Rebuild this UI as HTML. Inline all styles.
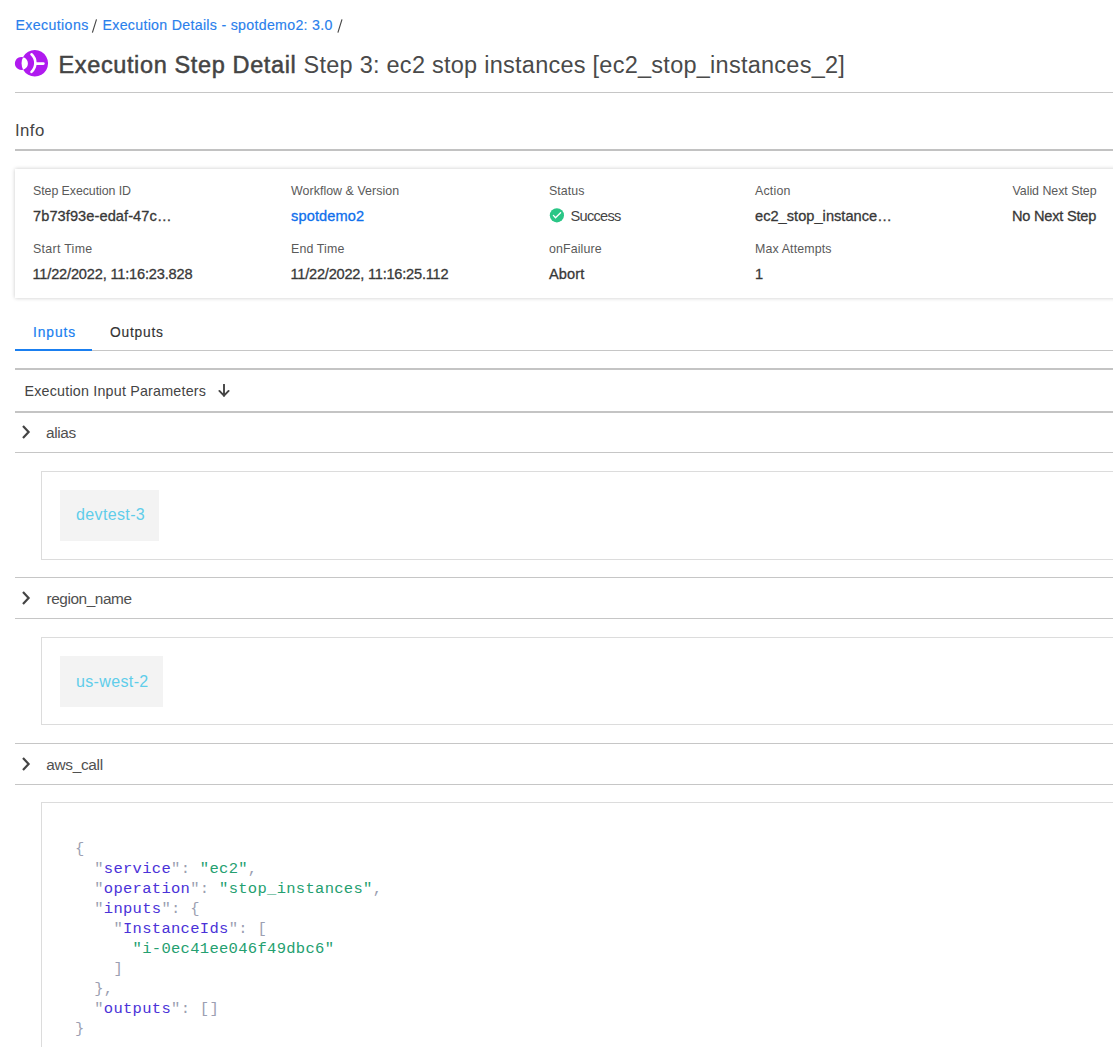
<!DOCTYPE html>
<html>
<head>
<meta charset="utf-8">
<style>
html,body{margin:0;padding:0;background:#fff;}
body{width:1113px;height:1047px;overflow:hidden;position:relative;font-family:"Liberation Sans",sans-serif;color:#444;}
.a{position:absolute;white-space:nowrap;line-height:1;}
.hl{position:absolute;left:15px;width:1110px;height:1px;background:#c6c6c6;}
.bc{font-size:14.2px;color:#2a80ec;top:18px;-webkit-text-stroke:0.15px #2a80ec;}
.sep{font-size:14.2px;color:#555;top:18px;}
.title{font-size:23.5px;top:53.5px;}
.lbl{font-size:12.4px;color:#5a5a5a;}
.r1{top:184.5px;}
.r2{top:242.5px;}
.val{font-size:14.6px;color:#383838;-webkit-text-stroke:0.3px #383838;}
.v1{top:208.6px;}
.v2{top:266.6px;}
.card{position:absolute;left:15px;top:169px;width:1200px;height:129px;background:#fff;box-shadow:0 0 4px rgba(0,0,0,.22);}
.row{font-size:15.4px;color:#505050;}
.chev{position:absolute;left:20px;width:12px;height:16px;}
.box{position:absolute;left:41px;width:1200px;border:1px solid #dcdcdc;background:#fff;}
.chip{position:absolute;left:60px;background:#f3f3f3;}
.chip span{position:absolute;font-size:16px;color:#5fcdea;line-height:1;white-space:nowrap;}
pre{margin:0;position:absolute;left:75px;top:838.5px;font-family:"Liberation Mono",monospace;font-size:15.5px;letter-spacing:0.3px;line-height:20px;color:#9c9fb2;}
.k{color:#4a32d8;}
.s{color:#24a070;}
</style>
</head>
<body>
<!-- breadcrumb -->
<div class="a bc" style="left:15.5px;letter-spacing:0.37px;">Executions</div>
<svg style="position:absolute;left:0;top:0;" width="360" height="40"><path d="M96.5 19.3 L92.4 32.6 M342 19.3 L337.9 32.6" stroke="#474747" stroke-width="1.15" fill="none"/></svg>
<div class="a bc" style="left:102.5px;letter-spacing:0.3px;">Execution Details - spotdemo2: 3.0</div>


<!-- icon -->
<svg style="position:absolute;left:0;top:0;" width="60" height="90" viewBox="0 0 60 90">
  <path fill="#b01aef" fill-rule="evenodd" d="M34.8 50.05a13.25 13.25 0 1 0 0.001 0z M21.4 56.9a6.5 6.5 0 1 0 0.001 0z"/>
  <path d="M31.5 54.3 A11.95 11.95 0 0 1 31.5 71.9" fill="none" stroke="#fff" stroke-width="2.6" stroke-linecap="round"/>
  <path d="M35.6 63.6 H43.4" fill="none" stroke="#fff" stroke-width="2.6" stroke-linecap="round"/>
</svg>

<div class="a title" style="left:58.5px;color:#444;-webkit-text-stroke:0.5px #444;letter-spacing:0.63px;">Execution Step Detail</div>
<div class="a title" style="left:303.5px;color:#4a4a4a;letter-spacing:0.256px;">Step 3: ec2 stop instances [ec2_stop_instances_2]</div>
<div class="hl" style="top:92px;"></div>

<div class="a" style="left:15px;top:122.6px;font-size:16.8px;color:#444;letter-spacing:0.43px;">Info</div>
<div class="hl" style="top:149px;height:2px;background:#c2c2c2;"></div>

<div class="card"></div>
<div class="a lbl r1" style="left:33px;letter-spacing:-0.07px;">Step Execution ID</div>
<div class="a val v1" style="left:33px;letter-spacing:0.08px;">7b73f93e-edaf-47c…</div>
<div class="a lbl r2" style="left:33px;letter-spacing:0.3px;">Start Time</div>
<div class="a val v2" style="left:32.5px;letter-spacing:-0.18px;">11/22/2022, 11:16:23.828</div>

<div class="a lbl r1" style="left:291px;letter-spacing:0.05px;">Workflow &amp; Version</div>
<div class="a val v1" style="left:291px;color:#0f6fec;-webkit-text-stroke:0.3px #0f6fec;letter-spacing:0.12px;">spotdemo2</div>
<div class="a lbl r2" style="left:291px;letter-spacing:0.14px;">End Time</div>
<div class="a val v2" style="left:290.5px;letter-spacing:-0.22px;">11/22/2022, 11:16:25.112</div>

<div class="a lbl r1" style="left:549px;letter-spacing:0.06px;">Status</div>
<svg style="position:absolute;left:549px;top:208px;" width="16" height="16" viewBox="0 0 16 16"><circle cx="7.9" cy="7.3" r="7.1" fill="#2ac686"/><path d="M4.4 7.4 L6.5 9.7 L11.6 4.8" fill="none" stroke="#fff" stroke-width="1.35" stroke-linecap="round"/></svg>
<div class="a" style="left:570.5px;top:208.6px;font-size:14.6px;color:#444;letter-spacing:-0.72px;">Success</div>
<div class="a lbl r2" style="left:549px;letter-spacing:0.12px;">onFailure</div>
<div class="a val v2" style="left:549px;letter-spacing:0.12px;">Abort</div>

<div class="a lbl r1" style="left:755px;letter-spacing:0.2px;">Action</div>
<div class="a val v1" style="left:755px;letter-spacing:0.03px;">ec2_stop_instance…</div>
<div class="a lbl r2" style="left:755px;letter-spacing:0.13px;">Max Attempts</div>
<div class="a val v2" style="left:755px;">1</div>

<div class="a lbl r1" style="left:1012.5px;letter-spacing:-0.03px;">Valid Next Step</div>
<div class="a val v1" style="left:1012px;letter-spacing:-0.22px;">No Next Step</div>

<!-- tabs -->
<div class="a" style="left:33px;top:326.2px;font-size:13.8px;color:#1a7ff0;-webkit-text-stroke:0.2px #1a7ff0;letter-spacing:0.9px;">Inputs</div>
<div class="a" style="left:110px;top:326.2px;font-size:13.8px;color:#333;-webkit-text-stroke:0.15px #333;letter-spacing:0.78px;">Outputs</div>
<div class="hl" style="top:350px;"></div>
<div style="position:absolute;left:15px;top:349px;width:77px;height:2px;background:#1a7ff0;"></div>
<div class="hl" style="top:368px;height:2px;background:#c4c4c4;"></div>

<div class="a" style="left:24.5px;top:383.8px;font-size:14.3px;color:#444;letter-spacing:0.2px;">Execution Input Parameters</div>
<svg style="position:absolute;left:216px;top:384px;" width="16" height="14" viewBox="0 0 16 14"><path d="M8 0.6 V12 M3.4 6.9 L8 11.7 L12.6 6.9" fill="none" stroke="#444" stroke-width="1.9" stroke-linecap="round"/></svg>
<div class="hl" style="top:411px;height:2px;background:#c4c4c4;"></div>

<!-- alias -->
<svg class="chev" style="top:424px;" viewBox="0 0 12 16"><path d="M3 2 L8.6 8 L3 14" fill="none" stroke="#444" stroke-width="2.2"/></svg>
<div class="a row" style="left:46px;top:425px;letter-spacing:-0.37px;">alias</div>
<div class="hl" style="top:452px;"></div>
<div class="box" style="top:471px;height:87px;"></div>
<div class="chip" style="top:490px;width:99px;height:51px;"><span style="left:16px;top:17.3px;letter-spacing:0.37px;">devtest-3</span></div>

<!-- region_name -->
<div class="hl" style="top:577px;"></div>
<svg class="chev" style="top:590px;" viewBox="0 0 12 16"><path d="M3 2 L8.6 8 L3 14" fill="none" stroke="#444" stroke-width="2.2"/></svg>
<div class="a row" style="left:46.5px;top:591px;letter-spacing:-0.44px;">region_name</div>
<div class="hl" style="top:618px;"></div>
<div class="box" style="top:637px;height:86px;"></div>
<div class="chip" style="top:656px;width:103px;height:51px;"><span style="left:16px;top:17.5px;letter-spacing:0.36px;">us-west-2</span></div>

<!-- aws_call -->
<div class="hl" style="top:743px;"></div>
<svg class="chev" style="top:756px;" viewBox="0 0 12 16"><path d="M3 2 L8.6 8 L3 14" fill="none" stroke="#444" stroke-width="2.2"/></svg>
<div class="a row" style="left:46.3px;top:757px;letter-spacing:-0.31px;">aws_call</div>
<div class="hl" style="top:784px;"></div>
<div class="box" style="top:802px;height:400px;"></div>

<pre>{
  "<span class="k">service</span>": <span class="s">"ec2"</span>,
  "<span class="k">operation</span>": <span class="s">"stop_instances"</span>,
  "<span class="k">inputs</span>": {
    "<span class="k">InstanceIds</span>": [
      <span class="s">"i-0ec41ee046f49dbc6"</span>
    ]
  },
  "<span class="k">outputs</span>": []
}</pre>
</body>
</html>
